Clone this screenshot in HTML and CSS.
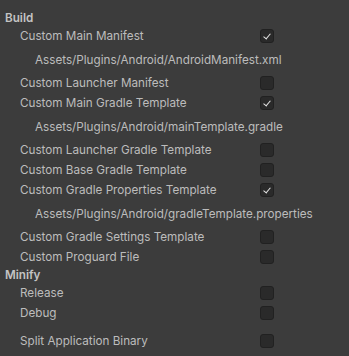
FILE: index.html
```html
<!DOCTYPE html>
<html lang="en">
<head>
    <meta charset="UTF-8">
    <title>Publishing Settings</title>
    <link rel="stylesheet" href="styles.css">
</head>
<body>

<div class="inspector">

    <!-- Build -->
    <div class="header">Build</div>
    <div class="row"><span class="label">Custom Main Manifest</span><span class="toggle on"></span></div>
    <div class="path">Assets/Plugins/Android/AndroidManifest.xml</div>
    <div class="row"><span class="label">Custom Launcher Manifest</span><span class="toggle"></span></div>
    <div class="row"><span class="label">Custom Main Gradle Template</span><span class="toggle on"></span></div>
    <div class="path">Assets/Plugins/Android/mainTemplate.gradle</div>
    <div class="row"><span class="label">Custom Launcher Gradle Template</span><span class="toggle"></span></div>
    <div class="row"><span class="label">Custom Base Gradle Template</span><span class="toggle"></span></div>
    <div class="row"><span class="label">Custom Gradle Properties Template</span><span class="toggle on"></span></div>
    <div class="path">Assets/Plugins/Android/gradleTemplate.properties</div>
    <div class="row"><span class="label">Custom Gradle Settings Template</span><span class="toggle"></span></div>
    <div class="row"><span class="label">Custom Proguard File</span><span class="toggle"></span></div>

    <!-- Minify -->
    <div class="header">Minify</div>
    <div class="row"><span class="label">Release</span><span class="toggle"></span></div>
    <div class="row"><span class="label">Debug</span><span class="toggle"></span></div>

    <div class="row spaced"><span class="label">Split Application Binary</span><span class="toggle"></span></div>

</div>

</body>
</html>
```

FILE: styles.css
```css
* {
    margin: 0;
    padding: 0;
    box-sizing: border-box;
}

body {
    background-color: #3c3c3c;
    color: #bcbcbc;
    font-family: 'Inter', 'Liberation Sans', sans-serif;
    font-size: 11.7px;
}

.inspector {
    padding: 10px 0 0 5px;
}

.header {
    height: 16px;
    line-height: 16px;
    font-weight: 600;
    color: #c4c4c4;
}

.row {
    display: flex;
    align-items: center;
    height: 20px;
    padding-left: 15px;
}

.row .label {
    width: 240px;
}

.row.spaced {
    margin-top: 8px;
}

.path {
    height: 20px;
    line-height: 20px;
    margin: 4px 0 3px;
    padding-left: 30px;
}

.toggle {
    width: 14px;
    height: 14px;
    background-color: #2a2a2a;
    border: 1px solid #212121;
    border-radius: 3px;
    position: relative;
}

.toggle.on::after {
    content: "";
    position: absolute;
    left: 4px;
    top: 1.5px;
    width: 3px;
    height: 6px;
    border-right: 1.5px solid #e4e4e4;
    border-bottom: 1.5px solid #e4e4e4;
    transform: rotate(40deg);
}
```
